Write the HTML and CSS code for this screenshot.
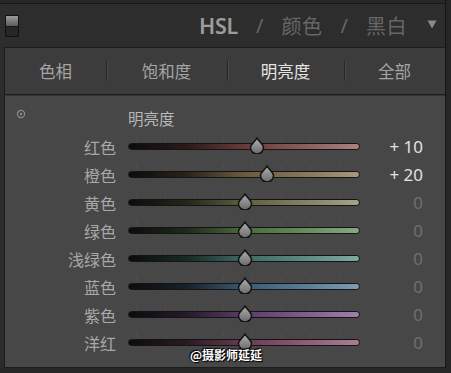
FILE: index.html
```html
<!DOCTYPE html>
<html>
<head>
<meta charset="utf-8">
<link rel="stylesheet" href="styles.css">
</head>
<body>
<div class="frame">
  <div class="topline"></div>
  <header class="header">
    <div class="toggle"><div class="toggle-knob"></div></div>
    <div class="title">
      <span class="hsl">HSL</span>
      <span class="slash">/</span>
      <span class="mode">颜色</span>
      <span class="slash">/</span>
      <span class="mode">黑白</span>
    </div>
    <svg class="tri" width="10" height="9" viewBox="0 0 10 9"><path d="M0.5 0.5 H9.5 L5 8.5 Z" fill="#8a8a8a"/></svg>
  </header>
  <nav class="tabs">
    <div class="tab">色相</div>
    <div class="tab sep">饱和度</div>
    <div class="tab sep active">明亮度</div>
    <div class="tab sep">全部</div>
  </nav>
  <main class="panel">
    <div class="row head">
      <div class="target"><svg width="10" height="10" viewBox="0 0 10 10"><circle cx="5" cy="5" r="3.6" fill="none" stroke="#8a8a8a" stroke-width="1.2"/><circle cx="5" cy="5" r="1.2" fill="#8a8a8a"/></svg></div>
      <div class="section">明亮度</div>
    </div>
    <div class="row"><div class="label">红色</div><div class="slider"><div class="track red"></div><div class="ticks"></div><svg class="thumb" style="left:121px" viewBox="0 0 16 17"><defs><linearGradient id="tg" x1="0" y1="0" x2="0" y2="1"><stop offset="0" stop-color="#b0b0b0"/><stop offset="1" stop-color="#6a6a6a"/></linearGradient></defs><path d="M8 1 C9.5 4 14.5 7.5 14.5 10.5 A6.5 6.5 0 0 1 1.5 10.5 C1.5 7.5 6.5 4 8 1 Z" fill="url(#tg)" stroke="#111" stroke-width="1.5"/></svg></div><div class="value on">+ 10</div></div>
    <div class="row"><div class="label">橙色</div><div class="slider"><div class="track orange"></div><div class="ticks"></div><svg class="thumb" style="left:131px" viewBox="0 0 16 17"><path d="M8 1 C9.5 4 14.5 7.5 14.5 10.5 A6.5 6.5 0 0 1 1.5 10.5 C1.5 7.5 6.5 4 8 1 Z" fill="url(#tg)" stroke="#111" stroke-width="1.5"/></svg></div><div class="value on">+ 20</div></div>
    <div class="row"><div class="label">黄色</div><div class="slider"><div class="track yellow"></div><div class="ticks"></div><svg class="thumb" style="left:109px" viewBox="0 0 16 17"><path d="M8 1 C9.5 4 14.5 7.5 14.5 10.5 A6.5 6.5 0 0 1 1.5 10.5 C1.5 7.5 6.5 4 8 1 Z" fill="url(#tg)" stroke="#111" stroke-width="1.5"/></svg></div><div class="value">0</div></div>
    <div class="row"><div class="label">绿色</div><div class="slider"><div class="track green"></div><div class="ticks"></div><svg class="thumb" style="left:109px" viewBox="0 0 16 17"><path d="M8 1 C9.5 4 14.5 7.5 14.5 10.5 A6.5 6.5 0 0 1 1.5 10.5 C1.5 7.5 6.5 4 8 1 Z" fill="url(#tg)" stroke="#111" stroke-width="1.5"/></svg></div><div class="value">0</div></div>
    <div class="row"><div class="label">浅绿色</div><div class="slider"><div class="track aqua"></div><div class="ticks"></div><svg class="thumb" style="left:109px" viewBox="0 0 16 17"><path d="M8 1 C9.5 4 14.5 7.5 14.5 10.5 A6.5 6.5 0 0 1 1.5 10.5 C1.5 7.5 6.5 4 8 1 Z" fill="url(#tg)" stroke="#111" stroke-width="1.5"/></svg></div><div class="value">0</div></div>
    <div class="row"><div class="label">蓝色</div><div class="slider"><div class="track blue"></div><div class="ticks"></div><svg class="thumb" style="left:109px" viewBox="0 0 16 17"><path d="M8 1 C9.5 4 14.5 7.5 14.5 10.5 A6.5 6.5 0 0 1 1.5 10.5 C1.5 7.5 6.5 4 8 1 Z" fill="url(#tg)" stroke="#111" stroke-width="1.5"/></svg></div><div class="value">0</div></div>
    <div class="row"><div class="label">紫色</div><div class="slider"><div class="track purple"></div><div class="ticks"></div><svg class="thumb" style="left:109px" viewBox="0 0 16 17"><path d="M8 1 C9.5 4 14.5 7.5 14.5 10.5 A6.5 6.5 0 0 1 1.5 10.5 C1.5 7.5 6.5 4 8 1 Z" fill="url(#tg)" stroke="#111" stroke-width="1.5"/></svg></div><div class="value">0</div></div>
    <div class="row"><div class="label">洋红</div><div class="slider"><div class="track magenta"></div><div class="ticks"></div><svg class="thumb" style="left:109px" viewBox="0 0 16 17"><path d="M8 1 C9.5 4 14.5 7.5 14.5 10.5 A6.5 6.5 0 0 1 1.5 10.5 C1.5 7.5 6.5 4 8 1 Z" fill="url(#tg)" stroke="#111" stroke-width="1.5"/></svg></div><div class="value">0</div></div>
    <div class="watermark">@摄影师延延</div>
  </main>
</div>
</body>
</html>
```
FILE: styles.css
```css
html, body {
  margin: 0;
  padding: 0;
  background: #262626;
  width: 451px;
  height: 373px;
  overflow: hidden;
}
body {
  font-family: "Noto Sans CJK SC", "Noto Sans", sans-serif;
}
.frame {
  width: 445px;
  border-right: 1px solid #161616;
  background: #2c2c2c;
}
.topline {
  height: 3px;
  background: #282828;
  border-bottom: 1px solid #171717;
}
.header {
  height: 43px;
  display: flex;
  align-items: center;
  padding: 0 8px 0 5px;
  background: #2d2d2d;
}
.toggle {
  width: 12px;
  height: 20px;
  border: 1px solid #121212;
  background: #262626;
  display: flex;
  flex-direction: column;
}
.toggle-knob {
  height: 10px;
  background: linear-gradient(#9a9a9a, #5c5c5c);
  border-bottom: 1px solid #151515;
}
.title {
  margin-left: auto;
  display: flex;
  align-items: center;
  height: 43px;
}
.hsl {
  font-family: "Noto Sans", sans-serif;
  font-weight: 600;
  font-size: 21.5px;
  color: #9c9c9c;
  letter-spacing: -0.2px;
}
.slash {
  font-family: "Noto Sans", sans-serif;
  font-size: 20px;
  color: #666;
  margin: 0 18px 0 18px;
}
.mode {
  font-size: 20px;
  color: #666;
  letter-spacing: 0.5px;
}
.tri {
  margin-left: 20px;
  margin-top: -2px;
}
.tabs {
  margin-left: 4px;
  height: 46px;
  display: grid;
  grid-template-columns: 101px 121px 117px 1fr;
  align-items: center;
  background: #3c3c3c;
  border: 1px solid #1c1c1c;
  border-right: none;
}
.tab {
  text-align: center;
  font-size: 16.5px;
  color: #a4a4a4;
  height: 20px;
  line-height: 20px;
  position: relative;
}
.tab.active {
  color: #e4e4e4;
}
.tab.sep::before {
  content: "";
  position: absolute;
  left: 0;
  top: 0;
  width: 1px;
  height: 20px;
  background: #262626;
  box-shadow: 1px 0 0 #4a4a4a;
}
.panel {
  position: relative;
  margin-left: 4px;
  height: 273px;
  padding-top: 9px;
  box-sizing: border-box;
  background: #474747;
  border-left: 1px solid #1c1c1c;
  border-bottom: 1px solid #1c1c1c;
  border-top: 1px solid #353535;
}
.row {
  height: 28px;
  display: grid;
  grid-template-columns: 111px 232px 51px;
  column-gap: 12px;
  align-items: center;
}
.row.head {
  grid-template-columns: 111px 1fr;
  margin-top: -1px;
  margin-bottom: 1px;
}
.target {
  align-self: start;
  padding: 5px 0 0 11px;
  height: 10px;
}
.target svg { display: block; }
.section {
  font-size: 15.5px;
  color: #b8b8b8;
  line-height: 28px;
}
.label {
  text-align: right;
  font-size: 16px;
  color: #a8a8a8;
  line-height: 28px;
}
.slider {
  position: relative;
  height: 28px;
}
.track {
  position: absolute;
  left: 0;
  right: 0;
  top: 10px;
  height: 5px;
  border: 1px solid #151515;
  border-radius: 4px;
  box-sizing: content-box;
}
.ticks {
  position: absolute;
  left: 8px;
  right: 8px;
  top: 4px;
  height: 4px;
  background: repeating-linear-gradient(90deg, #555 0 1px, transparent 1px 29px);
  opacity: 0.6;
}
.red { background: linear-gradient(90deg, #0c0c0c 0%, #2a1a1a 25%, #6a3a3a 50%, #8a5a5a 75%, #a88282 100%); }
.orange { background: linear-gradient(90deg, #0c0c0c 0%, #2a2218 25%, #6a5a40 50%, #857458 75%, #a89880 100%); }
.yellow { background: linear-gradient(90deg, #0c0c0c 0%, #26261a 25%, #5f5f3e 50%, #808060 75%, #a5a585 100%); }
.green { background: linear-gradient(90deg, #0c0c0c 0%, #1e2a1a 25%, #4a6a3e 50%, #68875a 75%, #8aa880 100%); }
.aqua { background: linear-gradient(90deg, #0c0c0c 0%, #182a28 25%, #3e6a62 50%, #5a8a82 75%, #80a8a2 100%); }
.blue { background: linear-gradient(90deg, #0c0c0c 0%, #18202a 25%, #3a5a72 50%, #587a92 75%, #7e9cb2 100%); }
.purple { background: linear-gradient(90deg, #0c0c0c 0%, #261a2a 25%, #5e3a6a 50%, #7e5a8a 75%, #a07eaa 100%); }
.magenta { background: linear-gradient(90deg, #0c0c0c 0%, #2a1a22 25%, #6a3a52 50%, #8a5a72 75%, #aa7e92 100%); }
.thumb {
  position: absolute;
  top: 4px;
  width: 16px;
  height: 17px;
}
.value {
  text-align: right;
  font-family: "Noto Sans", sans-serif;
  font-size: 17px;
  color: #6f6f6f;
  line-height: 28px;
}
.value.on {
  color: #e2e2e2;
}
.watermark {
  position: absolute;
  left: 185px;
  top: 250px;
  font-size: 12px;
  font-weight: 700;
  color: #fff;
  text-shadow: 0 0 2px #000, 1px 1px 1px #000, -1px -1px 1px #000;
}
```
